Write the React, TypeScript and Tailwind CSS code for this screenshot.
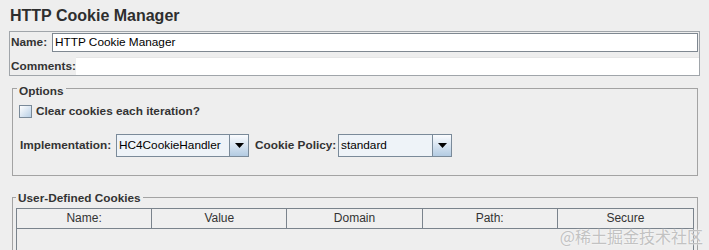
import React from 'react';

const headers = ['Name:', 'Value', 'Domain', 'Path:', 'Secure'];

const ArrowDown = () => (
  <svg width="9" height="5" viewBox="0 0 9 5">
    <polygon points="0,0 9,0 4.5,5" fill="#000" />
  </svg>
);

const Combo: React.FC<{ value: string; width: string }> = ({ value, width }) => (
  <div className={`flex h-[23px] border border-[#7a8a99] ${width}`}>
    <div className="flex flex-1 items-center bg-[#eef3f8] pl-[2px] font-normal text-[11.8px] text-black">{value}</div>
    <div className="flex w-[19px] items-center justify-center border-l border-[#7a8a99] bg-gradient-to-b from-[#fbfcfe] to-[#b3cbe2]">
      <ArrowDown />
    </div>
  </div>
);

export default function App() {
  return (
    <div className="relative h-[250px] w-[709px] overflow-hidden bg-[#eeeeee] font-['Liberation_Sans',Arial,sans-serif] text-[11.8px] font-bold leading-[13px] text-[#333333]">
      <div className="h-[31px] pl-[10px] pt-[6px] text-[16px] leading-[19px] text-[#2e2e2e]">
        HTTP Cookie Manager
      </div>

      <div className="ml-[9px] h-[45px] w-[691px] border border-[#a0a5aa]">
        <div className="mt-[1px] flex h-[19px] items-center">
          <span className="w-[42px] pl-[1px]">Name:</span>
          <div className="mr-[1px] flex h-[19px] flex-1 items-center border border-[#7f8891] bg-white pl-[2px] font-normal text-black">
            HTTP Cookie Manager
          </div>
        </div>
        <div className="mt-[5px] flex h-[18px] items-center">
          <span className="w-[66px] pl-[1px]">Comments:</span>
          <div className="h-[18px] flex-1 border-t border-[#e6e6e6] bg-white" />
        </div>
      </div>

      <div className="relative ml-[12px] mt-[12px] h-[88px] w-[686px] border border-[#a3a3a3]">
        <span className="absolute left-[4px] top-[-4px] bg-[#eeeeee] px-[2px]">Options</span>
        <div className="mt-[16px] flex h-[13px] items-center pl-[6px]">
          <div className="h-[13px] w-[13px] border border-[#7a8a99] bg-gradient-to-br from-[#ffffff] to-[#b8cfe5]" />
          <span className="ml-[4px]">Clear cookies each iteration?</span>
        </div>
        <div className="mt-[16px] flex h-[23px] items-center pl-[7px]">
          <span className="w-[96px]">Implementation:</span>
          <Combo value="HC4CookieHandler" width="w-[133px]" />
          <span className="w-[89px] pl-[6px]">Cookie Policy:</span>
          <Combo value="standard" width="w-[114px]" />
        </div>
      </div>

      <div className="relative ml-[12px] mt-[21px] h-[80px] w-[686px] border border-[#a3a3a3]">
        <span className="absolute left-[3px] top-[-6px] bg-[#eeeeee] px-[2px]">User-Defined Cookies</span>
        <div className="ml-[3px] mt-[10px] h-[70px] w-[678px] border-x border-t border-[#7a838c]">
          <div className="grid h-[20px] grid-cols-5 border-b border-[#7a838c] bg-[#efefef] font-normal text-[12px]">
            {headers.map((h, i) => (
              <div
                key={h}
                className={`flex items-center justify-center ${i < headers.length - 1 ? 'border-r border-[#7a838c]' : ''}`}
              >
                {h}
              </div>
            ))}
          </div>
        </div>
      </div>

      <div className="absolute bottom-[6px] right-[6px] font-['Noto_Sans_CJK_SC',sans-serif] text-[16px] font-normal leading-[16px] text-[#c2c2c2] [text-shadow:0_0_2px_#ffffff]">
        @稀土掘金技术社区
      </div>
    </div>
  );
}
